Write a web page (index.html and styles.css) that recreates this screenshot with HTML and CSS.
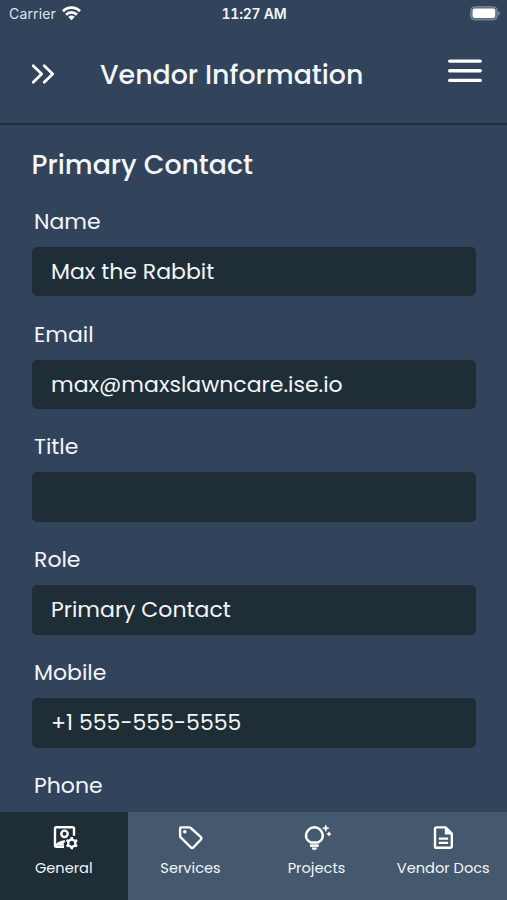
FILE: index.html
```html
<!DOCTYPE html>
<html lang="en">
<head>
<meta charset="utf-8">
<meta name="viewport" content="width=device-width, initial-scale=1">
<title>Vendor Information</title>
<link rel="stylesheet" href="styles.css">
</head>
<body>
<div class="app">
  <div class="status">
    <div class="carrier">
      <span>Carrier</span>
      <svg width="19" height="15" viewBox="0 0 19 15" fill="none" stroke="#fff" stroke-width="2.8"><path d="M1 5.2a12 12 0 0 1 17 0M4 8.7a7.8 7.8 0 0 1 11 0"/><path d="M9.5 14.2 6.3 10.9a4.5 4.5 0 0 1 6.4 0z" fill="#fff" stroke="none"/></svg>
    </div>
    <time class="time">11:27 AM</time>
    <svg class="battery" width="31" height="15" viewBox="0 0 31 15"><rect x=".8" y=".8" width="26.4" height="13" rx="3.8" fill="#59697e" stroke="#8592a3"/><rect x="2.6" y="2.6" width="22.6" height="9.4" rx="2" fill="#fff"/><path d="M28.3 5v4.6c2-.9 2-3.7 0-4.6z" fill="#8592a3"/></svg>
  </div>
  <header class="header">
    <svg class="chevrons" width="24" height="20" viewBox="0 0 24 20" fill="none" stroke="#fff" stroke-width="2.7" stroke-linecap="round" stroke-linejoin="round"><path d="m2.2 1.7 8.5 8.3-8.5 8.3M13.2 1.7l8.5 8.3-8.5 8.3"/></svg>
    <h1 class="title">Vendor Information</h1>
    <svg class="menu" width="36" height="24" viewBox="0 0 36 24" stroke="#fff" stroke-width="3.4" stroke-linecap="round"><path d="M2.7 2.1h30.6M2.7 11.8h30.6M2.7 21.4h30.6"/></svg>
  </header>
  <main class="content">
    <h2 class="heading">Primary Contact</h2>
    <div class="group"><span class="label">Name</span><div class="field">Max the Rabbit</div></div>
    <div class="group"><span class="label">Email</span><div class="field">max@maxslawncare.ise.io</div></div>
    <div class="group"><span class="label">Title</span><div class="field"></div></div>
    <div class="group"><span class="label">Role</span><div class="field">Primary Contact</div></div>
    <div class="group"><span class="label">Mobile</span><div class="field">+1 555-555-5555</div></div>
    <div class="group"><span class="label">Phone</span></div>
  </main>
  <nav class="tabs">
    <div class="tab active">
      <svg width="28" height="28" viewBox="0 0 28 28" fill="none" stroke="#fff" stroke-width="2.4"><path d="M14 22.8H6.3A1.3 1.3 0 0 1 5 21.5V4.6a1.3 1.3 0 0 1 1.3-1.3h16.4A1.3 1.3 0 0 1 24 4.6v7.2"/><circle cx="14.5" cy="9.8" r="3.2"/><path d="M5.5 21.8c2-2.6 5-4.4 9.3-4.6L9 20.6h5" stroke-width="2"/><path d="m21.8 15.2 3.5 2v4l-3.5 2-3.5-2v-4z"/><path d="M21.8 13v2M21.8 23.2v2M16.5 16.1l1.9 1.1M25.2 21.2l1.9 1.1M16.5 22.3l1.9-1.1M25.2 17.2l1.9-1.1"/></svg>
      <span>General</span>
    </div>
    <div class="tab">
      <svg width="28" height="28" viewBox="0 0 28 28" fill="none" stroke="#fff" stroke-width="2.4" stroke-linejoin="round"><path d="M4.2 3.4h8.2a2 2 0 0 1 1.4.6l10.1 9.2a1.6 1.6 0 0 1 0 2.3l-7.6 8a1.6 1.6 0 0 1-2.3 0L3.7 13.4a2 2 0 0 1-.6-1.4V4.5a1.1 1.1 0 0 1 1.1-1.1z"/><circle cx="7.8" cy="7.8" r="1.8" fill="#fff" stroke="none"/></svg>
      <span>Services</span>
    </div>
    <div class="tab">
      <svg width="28" height="28" viewBox="0 0 28 28" fill="none" stroke="#fff" stroke-width="2.5"><path d="M7.8 18.5C4.9 16.9 3 14.6 3 11.7a8.4 8.4 0 0 1 16.8 0c0 2.9-1.9 5.2-4.8 6.8z" stroke-linejoin="round"/><path d="M7 21.6h8.8"/><path d="M8.8 23.6H14a2.6 2.5 0 0 1-5.2 0z" fill="#fff" stroke="none"/><path d="m22.8.9.9 2.4 2.4.9-2.4.9-.9 2.4-.9-2.4-2.4-.9 2.4-.9zM26 7.9l.8 1.3 1.3.8-1.3.8-.8 1.3-.8-1.3-1.3-.8 1.3-.8z" fill="#fff" stroke="#fff" stroke-width=".6"/></svg>
      <span>Projects</span>
    </div>
    <div class="tab">
      <svg width="28" height="28" viewBox="0 0 28 28" fill="none" stroke="#fff" stroke-width="2.4" stroke-linejoin="round"><path d="M7.4 3.4h9.2l6.2 6.2v12.8a1.4 1.4 0 0 1-1.4 1.4h-14A1.4 1.4 0 0 1 6 22.4V4.8a1.4 1.4 0 0 1 1.4-1.4z"/><path d="M15.8 3.4h1l6 6v1.2h-7z" fill="#fff" stroke="none"/><path d="M9.8 14.6h9.4M9.8 18.9h9.4" stroke-width="2.1"/></svg>
      <span>Vendor Docs</span>
    </div>
  </nav>
</div>
</body>
</html>
```
FILE: styles.css
```css
* { box-sizing: border-box; }
body {
  margin: 0;
  background: #32445b;
  color: #f3f6fa;
  font-family: "Poppins", "Inter", "Lato", sans-serif;
}
svg { display: block; flex: none; overflow: visible; }
.app { display: flex; flex-direction: column; height: 900px; overflow: hidden; }
.status {
  display: grid;
  grid-template-columns: 1fr auto 1fr;
  align-items: center;
  height: 28px;
  padding: 0 6px 0 9px;
  font-family: "Inter", sans-serif;
  font-size: 14px;
  line-height: 28px;
}
.carrier { display: flex; align-items: center; gap: 6px; color: #dfe5ec; }
.carrier span { letter-spacing: 0.15px; }
.carrier svg { margin-top: -2px; }
.time { font-weight: 600; font-feature-settings: "tnum"; letter-spacing: -0.25px; margin-right: 2px; }
.battery { justify-self: end; margin-top: -2px; }
.header {
  display: flex;
  align-items: center;
  flex: none;
  height: 97px;
  padding: 0 24px 2px 31px;
  border-bottom: 2px solid #20303b;
}
.title, .heading {
  margin: 0;
  font-size: 26.8px;
  line-height: 36px;
  font-weight: 500;
  white-space: nowrap;
}
.chevrons { margin-top: -1px; }
.title { margin-left: 45px; }
.menu { margin-left: auto; margin-top: -7px; }
.content {
  flex: 1;
  min-height: 0;
  overflow: hidden;
  padding: 22px 31px 0 31.5px;
}
.heading { height: 36px; }
.group { height: 112.8px; padding-top: 21.8px; }
.label { display: block; height: 42px; padding-left: 2.5px; font-size: 22px; line-height: 34px; }
.field {
  height: 49.6px;
  padding-left: 19.5px;
  border-radius: 5px;
  background: #1f2d37;
  font-size: 22px;
  line-height: 50px;
  white-space: nowrap;
}
.tabs {
  display: grid;
  grid-template-columns: 127.5px 126px 126px 1fr;
  flex: none;
  height: 88px;
  background: #44596d;
}
.tab {
  display: flex;
  flex-direction: column;
  align-items: center;
  padding-top: 12px;
  font-size: 14.6px;
  white-space: nowrap;
}
.tab span { line-height: 22px; margin-top: 5px; }
.active { background: #1f2d37; }
```
